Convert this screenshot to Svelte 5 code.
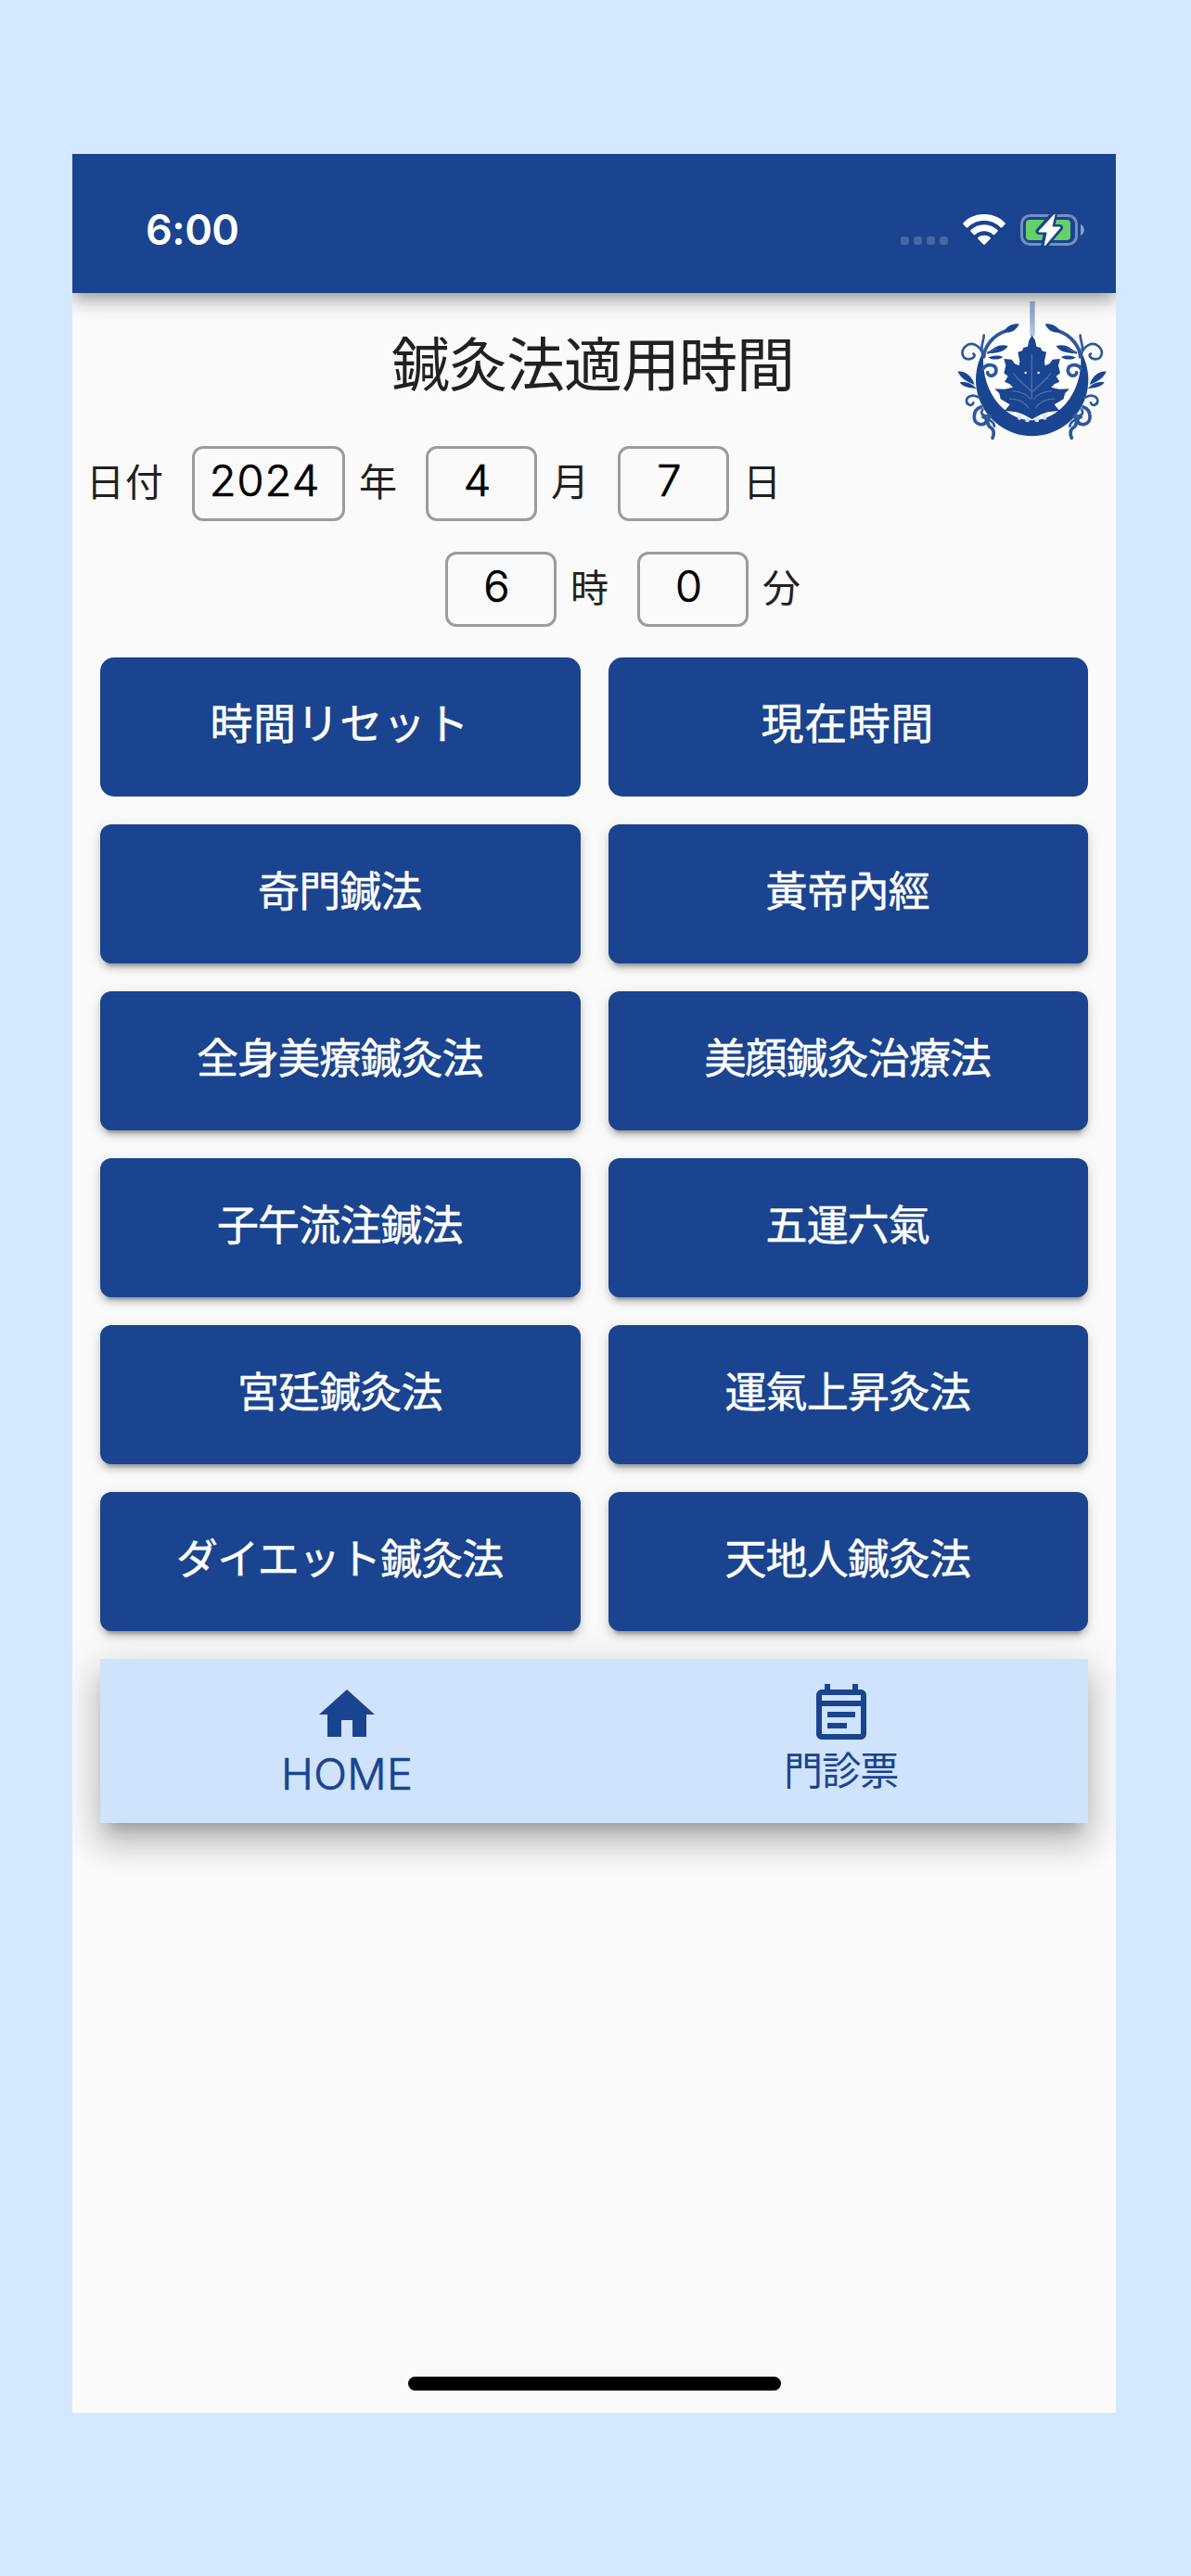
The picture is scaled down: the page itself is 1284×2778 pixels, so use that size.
<script>
  let year = $state(2024);
  let month = $state(4);
  let day = $state(7);
  let hour = $state(6);
  let minute = $state(0);

  const treatments = [
    '奇門鍼法',
    '黃帝內經',
    '全身美療鍼灸法',
    '美顔鍼灸治療法',
    '子午流注鍼法',
    '五運六氣',
    '宮廷鍼灸法',
    '運氣上昇灸法',
    'ダイエット鍼灸法',
    '天地人鍼灸法'
  ];

  const resetTime = () => {
    hour = 0;
    minute = 0;
  };

  const setNow = () => {
    const now = new Date();
    year = now.getFullYear();
    month = now.getMonth() + 1;
    day = now.getDate();
    hour = now.getHours();
    minute = now.getMinutes();
  };
</script>

{#snippet flourish()}
  <!-- vine and bud -->
  <path class="line thick" d="M122 210C122 180 150 140 192 126" />
  <path d="M186 130C196 108 215 102 236 103C228 124 208 134 186 130Z" />
  <path class="line" d="M116 188C112 170 122 158 122 140" />
  <!-- outer curls -->
  <path class="line" d="M120 205C112 172 82 158 62 176C44 194 54 218 74 217C92 215 96 202 88 200" />
  <path class="line" d="M108 342C88 328 66 336 66 352C66 368 86 370 88 358" />
  <path class="line thick" d="M112 372C84 382 84 424 110 428C132 430 138 408 120 404" />
  <path class="line" d="M118 380C108 396 124 404 138 398" />
  <path class="line thick" d="M142 402C130 414 134 432 144 438C156 446 156 458 150 472" />
  <path class="line" d="M138 414C146 416 154 424 156 434" />
  <!-- outer leaves -->
  <path d="M38 257C62 255 84 272 92 300C68 290 48 280 38 257Z" />
  <path d="M44 292C64 288 84 296 98 312C74 310 54 308 44 292Z" />
  <!-- inner leaves and curl -->
  <path d="M140 198C150 176 176 168 200 174C192 192 164 198 140 198Z" />
  <path d="M136 212C152 204 170 204 184 210C172 220 150 220 136 212Z" />
  <path class="line" d="M136 196L160 184" />
  <path class="line thick" d="M120 248C130 230 160 232 162 252C162 274 134 276 134 260" />
  <!-- leaf half -->
  <path d="M279 138L268 156L264 176L250 180L246 190L232 194L238 224L236 238L222 232L212 218L187 216L193 238L187 262L200 272L189 290L206 298L216 308L190 314L157 313L172 328L176 346L206 364L189 384L226 388L250 396L279 412Z" />
  <path class="vein" d="M274 348C262 330 238 322 214 320M276 322C256 300 232 286 218 262M268 376C250 350 222 344 204 346" />
  <circle class="gap" cx="257" cy="261" r="4" />
  <path class="gap" d="M228 398L242 396L246 410L234 414ZM258 404L270 410L268 420L256 420Z" />
{/snippet}

<div class="phone">
  <header class="status-bar">
    <span class="clock">6:00</span>
    <div class="status-icons">
      <div class="signal"><i></i><i></i><i></i><i></i></div>
      <svg class="wifi" viewBox="0 0 46 34">
        <path d="M23 0C32 0 40 3.4 45.4 9.2C45.9 9.8 45.9 10.5 45.4 11L42.3 14.2C41.8 14.7 41.1 14.7 40.6 14.2C36 9.7 29.8 7.1 23 7.1S10 9.7 5.4 14.2C4.9 14.7 4.2 14.7 3.7 14.2L.6 11C.1 10.5.1 9.8.6 9.2C6 3.4 14 0 23 0Z" />
        <path d="M23 11.3C28.6 11.3 33.6 13.5 37.4 17.1C37.9 17.6 37.9 18.3 37.4 18.8L34.2 21.9C33.7 22.4 33 22.4 32.5 21.9C30 19.6 26.7 18.3 23 18.3S16 19.6 13.5 21.9C13 22.4 12.3 22.4 11.8 21.9L8.6 18.8C8.1 18.3 8.1 17.6 8.6 17.1C12.4 13.5 17.4 11.3 23 11.3Z" />
        <path d="M23 22.7C25.5 22.7 27.8 23.6 29.5 25.1C30 25.6 30 26.3 29.5 26.8L23.8 32.5C23.3 33 22.7 33 22.2 32.5L16.5 26.8C16 26.3 16 25.6 16.5 25.1C18.2 23.6 20.5 22.7 23 22.7Z" />
      </svg>
      <svg class="battery" viewBox="0 0 70 38">
        <rect x="1.5" y="3.5" width="59" height="31" rx="9" fill="none" stroke="#7690be" stroke-width="3" />
        <path d="M65 13C70 15 70 23 65 25Z" fill="#8ba1c8" />
        <rect x="6" y="8" width="48" height="22" rx="4" fill="#69d067" />
        <path class="bolt" d="M36.3 2L20 20.4H28.6L25.8 36L42.6 16.4H33.8Z" />
        <path d="M36.3 2.2C36.8 1.6 37.7 2 37.5 2.8L34.4 15.6H42.3C43.2 15.6 43.5 16.4 43 17L27.3 35.5C26.6 36.3 25.6 35.8 25.8 35L28.6 21.5H20.6C19.7 21.5 19.4 20.6 19.9 20Z" fill="#fff" />
      </svg>
    </div>
  </header>

  <main>
    <div class="title-row">
      <h1>鍼灸法適用時間</h1>
      <svg class="logo" viewBox="0 3 549 480">
        <defs>
          <linearGradient id="needle" x1="0" x2="0" y1="0" y2="1">
            <stop offset="0" stop-color="#7d98c4" />
            <stop offset="0.5" stop-color="#93abd0" />
            <stop offset="1" stop-color="#bccbe2" />
          </linearGradient>
        </defs>
        <circle cx="278" cy="275" r="164" fill="#fff" />
        <rect x="271" y="30" width="16" height="112" fill="url(#needle)" />
        <path d="M122 190A182 182 0 1 0 434 190A158 194 0 1 1 122 190Z" />
        <g>{@render flourish()}</g>
        <g transform="translate(556 0) scale(-1 1)">{@render flourish()}</g>
        <path class="vein" d="M277 200V345" />
      </svg>
    </div>

    <div class="date-form">
      <div class="fields">
        <span>日付</span>
        <div class="box wide">{year}</div>
        <span>年</span>
        <div class="box">{month}</div>
        <span>月</span>
        <div class="box">{day}</div>
        <span>日</span>
      </div>
      <div class="fields time">
        <div class="box">{hour}</div>
        <span>時</span>
        <div class="box">{minute}</div>
        <span>分</span>
      </div>
    </div>

    <div class="buttons">
      <button class="flat" onclick={resetTime}>時間リセット</button>
      <button class="flat" onclick={setNow}>現在時間</button>
      {#each treatments as name}
        <button>{name}</button>
      {/each}
    </div>

    <nav>
      <div class="tab">
        <svg viewBox="0 0 24 24"><path d="M10 20v-6h4v6h5v-8h3L12 3 2 12h3v8z" /></svg>
        <span class="latin">HOME</span>
      </div>
      <div class="tab">
        <svg viewBox="0 0 24 24">
          <path d="M19 3h-1V1h-2v2H8V1H6v2H5c-1.1 0-2 .9-2 2v14c0 1.1.9 2 2 2h14c1.1 0 2-.9 2-2V5c0-1.1-.9-2-2-2zm0 16H5V9h14v10zm0-12H5V5h14v2zM7 11h10v2H7zm0 4h7v2H7z" />
        </svg>
        <span>門診票</span>
      </div>
    </nav>
  </main>

  <div class="home-indicator"></div>
</div>

<style>
:global(body) {
  background: #d4e9ff;
}

.phone {
  display: flex;
  flex-direction: column;
  width: 1125px;
  height: 2436px;
  margin: 166px 0 0 78px;
  overflow: hidden;
  background: #fafafa;
  color: #212121;
  font-family: Inter, "Noto Sans CJK JP", sans-serif;
}

/* Status bar */
.status-bar {
  display: flex;
  justify-content: space-between;
  box-sizing: border-box;
  height: 150px;
  flex: none;
  padding: 63px 33px 0 79px;
  background: #1a448f;
  box-shadow: 0 6px 12px -3px rgba(0, 0, 0, 0.2), 0 12px 15px rgba(0, 0, 0, 0.14), 0 3px 30px rgba(0, 0, 0, 0.12);
}
.clock {
  color: #fff;
  font-size: 45px;
  font-weight: 600;
  letter-spacing: -0.5px;
  line-height: 38px;
}
.status-icons {
  display: flex;
  align-items: flex-start;
  height: 38px;
}
.signal {
  display: flex;
  gap: 5px;
  margin: 26px 16px 0 0;
}
.signal i {
  width: 9px;
  height: 9px;
  border-radius: 3px;
  background: #4468a5;
}
.wifi {
  width: 46px;
  height: 34px;
  margin: 2px 16px 0 0;
  fill: #fff;
}
.battery {
  width: 70px;
  height: 38px;
}
.bolt {
  fill: #1a448f;
  stroke: #1a448f;
  stroke-width: 7;
  stroke-linejoin: round;
}

/* Title */
main {
  flex: 1;
}
.title-row {
  display: grid;
  grid-template-columns: 183px 1fr 183px;
  height: 165px;
}
h1 {
  grid-column: 2;
  margin: 0;
  padding-right: 3px;
  font-size: 63px;
  font-weight: 400;
  letter-spacing: -1px;
  line-height: 155px;
  text-align: center;
}
.logo {
  width: 183px;
  height: 160px;
  fill: #1a4591;
}
.line {
  fill: none;
  stroke: #2f589c;
  stroke-width: 8;
  stroke-linecap: round;
}
.line.thick {
  stroke-width: 11;
}
.vein {
  fill: none;
  stroke: #4d70ac;
  stroke-width: 4;
}
.gap {
  fill: #dbe5f3;
}

/* Date fields */
.date-form {
  display: flex;
  flex-direction: column;
  gap: 33px;
}
.fields {
  display: flex;
  height: 81px;
  padding-left: 15px;
}
.fields.time {
  padding-left: 402px;
}
.fields span {
  font-size: 41px;
  letter-spacing: 1px;
  line-height: 79px;
}
.box {
  box-sizing: border-box;
  width: 120px;
  margin-right: 15px;
  padding-right: 8px;
  border: 3px solid #9c9c9c;
  border-radius: 12px;
  color: #000;
  font-size: 47px;
  font-weight: 300;
  letter-spacing: 1px;
  line-height: 68px;
  text-align: center;
  -webkit-text-stroke: 0.7px currentColor;
}
.box.wide {
  width: 165px;
}
span + .box {
  margin-left: 30px;
}

/* Buttons */
.buttons {
  display: grid;
  grid-template-columns: 1fr 1fr;
  grid-auto-rows: 150px;
  gap: 30px;
  padding: 33px 30px 30px;
}
button {
  padding: 0 1px 12px 0;
  border: none;
  border-radius: 12px;
  background: #1a448f;
  color: #fff;
  font-family: inherit;
  font-size: 45px;
  letter-spacing: -0.9px;
  -webkit-text-stroke: 0.5px #fff;
  box-shadow: 0 9px 3px -6px rgba(0, 0, 0, 0.2), 0 6px 6px rgba(0, 0, 0, 0.14), 0 3px 15px rgba(0, 0, 0, 0.12);
}
button.flat {
  padding-bottom: 14px;
  border-radius: 15px;
  font-size: 46px;
  letter-spacing: 0.6px;
  box-shadow: none;
}

/* Bottom navigation */
nav {
  display: flex;
  height: 177px;
  margin: 0 30px;
  background: #cfe3fc;
  color: #1a448f;
  box-shadow: 0 15px 15px -9px rgba(0, 0, 0, 0.2), 0 24px 30px 3px rgba(0, 0, 0, 0.14), 0 9px 42px 6px rgba(0, 0, 0, 0.12);
}
.tab {
  flex: 1;
  display: flex;
  flex-direction: column;
  align-items: center;
  padding-top: 24px;
}
.tab svg {
  width: 72px;
  height: 72px;
  fill: currentColor;
}
.tab span {
  font-size: 42px;
  line-height: 50px;
  letter-spacing: -0.8px;
}
.tab .latin {
  font-size: 47px;
  font-weight: 300;
  letter-spacing: 0.4px;
  line-height: 56px;
  -webkit-text-stroke: 0.7px currentColor;
}

.home-indicator {
  width: 402px;
  height: 15px;
  margin: 0 auto 24px;
  border-radius: 8px;
  background: #000;
}
</style>
